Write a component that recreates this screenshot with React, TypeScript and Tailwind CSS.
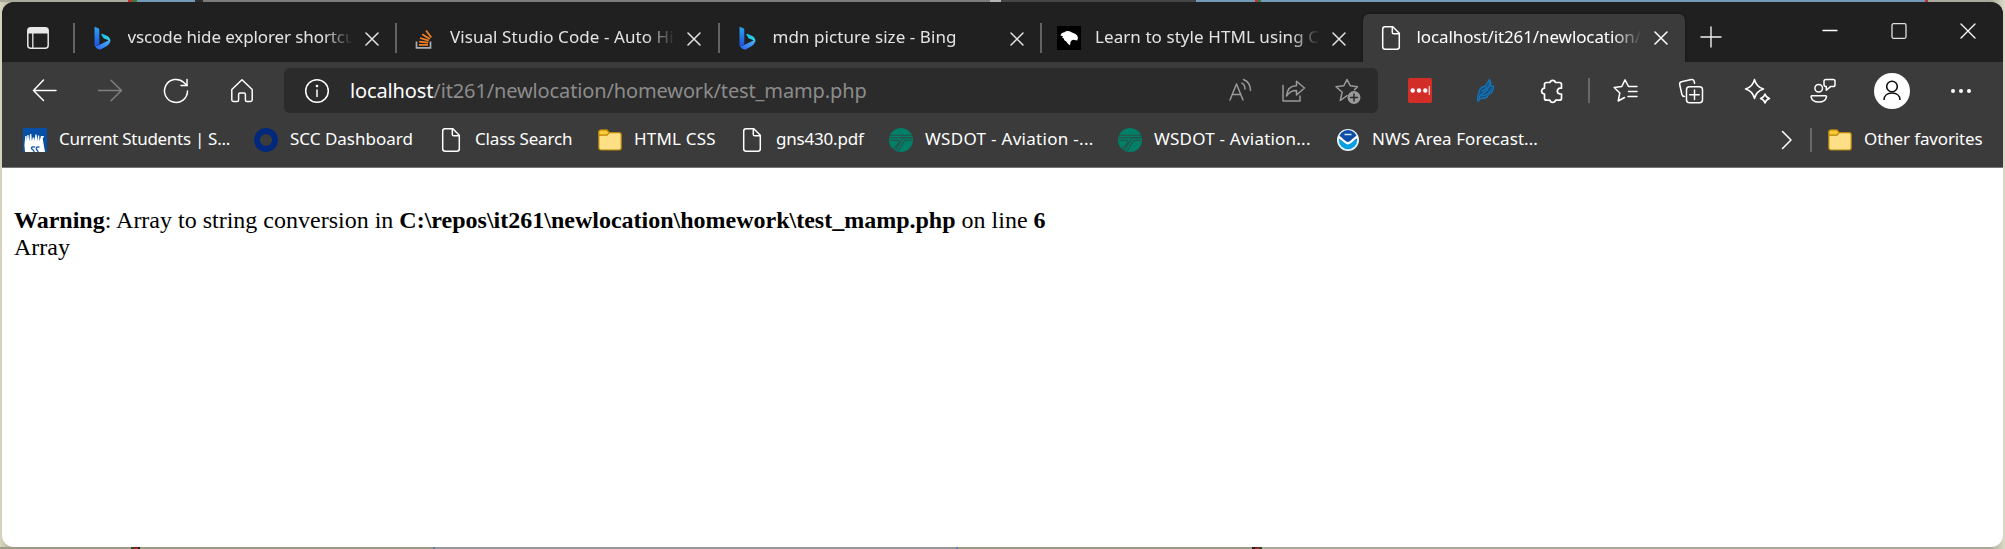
import React from "react";

const Bing = () => (
  <svg width="24" height="24" viewBox="0 0 24 24">
    <defs>
      <linearGradient id="bingStem" x1="0" y1="0" x2="0" y2="1">
        <stop offset="0" stopColor="#2ba6f0" />
        <stop offset="1" stopColor="#1c4fe0" />
      </linearGradient>
      <linearGradient id="bingBowl" x1="0" y1="1" x2="1" y2="0">
        <stop offset="0" stopColor="#2a62f4" />
        <stop offset="1" stopColor="#4bb8fb" />
      </linearGradient>
      <linearGradient id="bingTop" x1="0" y1="0" x2="1" y2="1">
        <stop offset="0" stopColor="#1fb4e8" />
        <stop offset="1" stopColor="#2fe0e8" />
      </linearGradient>
    </defs>
    <path d="M4.5 .8 8.3 2.2a1.6 1.6 0 0 1 1 1.5V18.500L5.600 20.600A2 2 0 0 1 4.500 18.500Z" fill="url(#bingStem)" />
    <path d="M5 19.300c.6 1 2 .8 3.200.1L20.300 13.500c0 3-1 5-3.500 6.500L11.500 23c-2.700 1.500-5.700-.5-6.500-3.700Z" fill="url(#bingBowl)" />
    <path d="M11.200 8.500c.3-.9 1-.8 1.700-.5l4.400 2.100c2.200 1.100 3.300 3.300 3 5.900-.7-1.400-2-2-3.400-2.500l-2.500-.8c-.6-.2-.9-.5-1.200-1Z" fill="url(#bingTop)" />
  </svg>
);

const StackOverflow = () => (
  <svg width="24" height="24" viewBox="0 0 24 24" fill="none">
    <path d="M4.500 15.500v6.300h14v-6.300" stroke="#a9adb1" strokeWidth="1.700" />
    <g stroke="#f48024" strokeWidth="1.800">
      <path d="M7 18.800h9" />
      <path d="m7.200 15.700 9 1" />
      <path d="m8 12 8.700 2.700" />
      <path d="m10.200 8.200 7.600 4.700" />
      <path d="m14 4.500 5.300 7" />
    </g>
  </svg>
);

const DinoHead = () => (
  <svg width="24" height="24" viewBox="0 0 24 24">
    <rect width="24" height="24" fill="#000" />
    <path d="M3.500 9.500C4 7 6 6.500 7.500 6.200 9 4.700 12 4.800 14.500 6.200L18.500 8l1.800 1.700.7 2.300-.8 2.500-3.700-.8c-1.500.2-2.500 1-3 2.500l-.5 3.300-2-1.700-2-2.500-1.700-1-.5-1.800-1.500-.8.600-1.500Z" fill="#fff" />
  </svg>
);

const FileIcon = () => (
  <svg width="24" height="24" viewBox="0 0 24 24" fill="none" stroke="#fff" strokeWidth="1.500">
    <path d="M6 .8h7.800l6.500 6.500v13.400a2.500 2.500 0 0 1-2.500 2.500H6.200a2.500 2.500 0 0 1-2.500-2.500V3.200A2.400 2.400 0 0 1 6 .8Z" />
    <path d="M13.300.8v5.600c0 .9.500 1.400 1.400 1.400h5.600" />
  </svg>
);

const Folder = () => (
  <svg width="24" height="24" viewBox="0 0 24 24" stroke="#b58407" strokeWidth="1.200">
    <path d="M.8 20V4a2 2 0 0 1 2-2H9l2.200 2.600h10a2 2 0 0 1 2 2V20a2 2 0 0 1-2 2H2.800a2 2 0 0 1-2-2Z" fill="#ffdf85" />
    <path d="M.8 7.200V4a2 2 0 0 1 2-2H9l2.200 2.600L9 7.200Z" fill="#fdcb3a" />
  </svg>
);

const Students = () => (
  <svg width="24" height="24" viewBox="0 0 24 24">
    <rect width="24" height="24" fill="#0750a8" />
    <path d="M2 24 1.400 17 2.300 8l1.300 0 .3 5.500L4.300 7h1.300l.6 6.500L7.100 6h1.200l.5 7 1-3.500h1.300l.5 3.500.7-6.500h1.300l.8 6.500.6-5.500h1.200l.3 5.500 1.400-4.500-.3-.5h3.600l-1.500 2.500.8 5L22 24Z" fill="#fff" />
    <path d="M12 19.200c-2-.8-3.700-.2-3.500 1.200.2 1.200 2.600 1.200 2.700 3.600M16.500 19.200c-2-.6-3.300 0-3.300 1.500 0 1.200 1.700 1.500 2 3.300" stroke="#0750a8" strokeWidth="1.300" fill="none" />
  </svg>
);

const Ring = () => (
  <svg width="24" height="24" viewBox="0 0 24 24">
    <circle cx="12" cy="12" r="9" fill="none" stroke="#00287c" strokeWidth="5.800" />
  </svg>
);

const Wsdot = () => (
  <svg width="24" height="24" viewBox="0 0 24 24">
    <circle cx="12" cy="12" r="12" fill="#008068" />
    <g fill="none" stroke="#2b4f48" strokeWidth="1.100">
      <path d="M1 7.300h22M0 9.800h23.500M1 12.300h7.500c2 0 1.800 1.500.8 3L4 21.500" />
      <path d="M23 12.300h-5.500c-1.700 0-2.500 1-3.200 2.200L9 23.500M23.300 9.800H16c-1.700 0-2.500 1-3.500 2.500L6 23" />
    </g>
  </svg>
);

const Noaa = () => (
  <svg width="24" height="24" viewBox="0 0 24 24">
    <circle cx="12" cy="12" r="11" fill="#e9f3fb" />
    <circle cx="12" cy="12" r="9.200" fill="#0a9fe0" />
    <path d="M2.800 11.300A9.200 9.200 0 0 1 21.200 11.300L12 15Z" fill="#0d4ea6" />
    <path d="M2.800 7.500c3 1.500 6 6 9.200 6.500 3-.5 5.500-5 9.400-6.700v3c-3.500 1.500-6 5.700-9.400 6.200-3.300-.5-6-4.700-9.400-5.800Z" fill="#fff" />
    <path d="M8.500 6.500h7" stroke="#d7e6f5" strokeWidth="1.500" />
  </svg>
);

type StrokeProps = { children: React.ReactNode; w?: number; h?: number; color?: string; sw?: number };

const Stroke = ({ children, w = 26, h = 26, color = "#fff", sw = 1.5 }: StrokeProps) => (
  <svg width={w} height={h} viewBox={`0 0 ${w} ${h}`} fill="none" stroke={color} strokeWidth={sw} strokeLinecap="round" strokeLinejoin="round" className="block shrink-0">
    {children}
  </svg>
);

const TabClose = ({ color = "#e4e4e4" }: { color?: string }) => (
  <Stroke w={14} h={14} color={color} sw={1.5}>
    <path d="m1 1 12 12M13 1 1 13" />
  </Stroke>
);

const PinnedPanel = () => (
  <svg width="22" height="22" viewBox="0 0 22 22" fill="none">
    <rect x=".8" y=".8" width="20.400" height="20.400" rx="3" stroke="#e8e8e8" strokeWidth="1.500" />
    <path d="M1 6.500V3.500A2.500 2.500 0 0 1 3.500 1h15A2.500 2.500 0 0 1 21 3.500v3Z" fill="#e8e8e8" />
    <path d="M5.800 6v15" stroke="#e8e8e8" strokeWidth="1.300" />
  </svg>
);

type Tab = { title: string; icon: React.ReactNode; track: string };

const tabs: Tab[] = [
  { title: "vscode hide explorer shortcut", icon: <Bing />, track: "tracking-[-0.11px]" },
  { title: "Visual Studio Code - Auto Hide", icon: <StackOverflow />, track: "tracking-[0.07px]" },
  { title: "mdn picture size - Bing", icon: <Bing />, track: "tracking-[0.07px]" },
  { title: "Learn to style HTML using CSS", icon: <DinoHead />, track: "tracking-[0.07px]" },
];

const bookmarks = [
  { label: "Current Students | S...", icon: <Students />, width: "w-[231px]", track: "tracking-[-0.29px]" },
  { label: "SCC Dashboard", icon: <Ring />, width: "w-[185px]", track: "tracking-[0px]" },
  { label: "Class Search", icon: <FileIcon />, width: "w-[159px]", track: "tracking-[-0.15px]" },
  { label: "HTML CSS", icon: <Folder />, width: "w-[142px]", track: "tracking-[0.2px]" },
  { label: "gns430.pdf", icon: <FileIcon />, width: "w-[149px]", track: "tracking-[-0.2px]" },
  { label: "WSDOT - Aviation -...", icon: <Wsdot />, width: "w-[229px]", track: "tracking-[0.3px]" },
  { label: "WSDOT - Aviation...", icon: <Wsdot />, width: "w-[218px]", track: "tracking-[0.22px]" },
  { label: "NWS Area Forecast...", icon: <Noaa />, width: "w-[240px]", track: "tracking-[0.07px]" },
];

const Title = ({ text, track, active = false }: { text: string; track: string; active?: boolean }) => (
  <div className="ml-[14px] w-[225px] overflow-hidden whitespace-nowrap [mask-image:linear-gradient(to_right,#000_196px,transparent_225px)]">
    <span className={`${track} ${active ? "text-white" : "text-[#e4e4e4]"}`}>{text}</span>
  </div>
);

const TabStrip = () => (
  <div className="flex h-[60px] bg-[#202020]">
    <div className="flex w-[70.500px] items-center pl-[25px] pt-[11px]">
      <PinnedPanel />
    </div>
    {tabs.map((t, i) => (
      <div key={i} className="flex w-[322.500px] items-center pt-[12px]">
        <div className="h-[30px] w-[2px] shrink-0 bg-[#636363]" />
        <div className="ml-[15px] shrink-0">{t.icon}</div>
        <div className="-mt-[2px]">
          <Title text={t.title} track={t.track} />
        </div>
        <div className="ml-[12px] mt-px">
          <TabClose />
        </div>
      </div>
    ))}
    <div className="mt-[12px] flex h-[48px] w-[322px] rounded-t-[6px] bg-[#3b3b3b] pl-[16px] shadow-[0_0_3px_rgba(0,0,0,0.6)] [clip-path:inset(-4px_-4px_0_-4px)]">
      <div className="mt-[12px] shrink-0">
        <FileIcon />
      </div>
      <div className="pt-[11px]">
        <Title text="localhost/it261/newlocation/homework" track="tracking-[-0.1px]" active />
      </div>
      <div className="ml-[12px] mt-[17px]">
        <TabClose color="#fff" />
      </div>
    </div>
    <div className="ml-[15px] mt-[24px]">
      <Stroke w={22} h={22} color="#f0f0f0" sw={1.4}>
        <path d="M11 1v20M1 11h20" />
      </Stroke>
    </div>
    <div className="ml-auto mr-[27px] flex gap-[53px] pt-[20px]">
      <Stroke w={16} h={18} sw={1.3}>
        <path d="M1 8.500h14" />
      </Stroke>
      <Stroke w={16} h={18} sw={1.3} color="#e0e0e0">
        <rect x="1" y="1.700" width="14" height="14.600" rx="1.500" />
      </Stroke>
      <Stroke w={16} h={18} sw={1.3}>
        <path d="m1 2 14 14M15 2 1 16" />
      </Stroke>
    </div>
  </div>
);

const AddressBar = () => (
  <div className="ml-[29px] flex h-[45px] w-[1094px] items-center rounded-[6px] bg-[#2b2b2b] pl-[20px] pr-[16px]">
    <Stroke>
      <circle cx="13" cy="13" r="11.300" />
      <path d="M13 12v6.500" />
      <circle cx="13" cy="8" r=".6" fill="#fff" />
    </Stroke>
    <div className="ml-[20px] whitespace-nowrap text-[20px] tracking-[-0.130px] text-[#8c8c8c]">
      <span className="text-white">localhost</span>/it261/newlocation/homework/test_mamp.php
    </div>
    <div className="ml-auto flex gap-[27px]">
      <Stroke color="#9a9a9a">
        <path d="M2 22 8.500 6 15 22M4.500 16.500h8" />
        <path d="M13.800 5.200c2 1 3.200 3.300 3.200 5.800M15.500 1.500c4.200 1.700 7 6 7 11" />
      </Stroke>
      <Stroke color="#9a9a9a">
        <path d="M2 7.500V23h17v-5" />
        <path d="M15.500 3.200v4.500C9.500 7.700 6 11.500 5.500 18c2.500-4 5.500-5.500 10-5.500V17l8-7Z" />
      </Stroke>
      <Stroke color="#9a9a9a" w={28}>
        <path d="m13 17.700-6.700 4.800L8.200 14.200 2 8.700l7.700-.9L13 1.500l3.300 6.300 7.200.9-3 3" />
        <circle cx="20" cy="19.500" r="6.500" fill="#9a9a9a" stroke="none" />
        <path d="M20 16v7M16.500 19.500h7" stroke="#2b2b2b" />
      </Stroke>
    </div>
  </div>
);

const Toolbar = () => (
  <div className="flex h-[57px] items-center pl-[29px]">
    <div className="flex gap-[40px]">
      <Stroke>
        <path d="M25 12.500H3M12.500 2 2.500 12.500l10 10" />
      </Stroke>
      <Stroke color="#808080">
        <path d="M1.500 12.500h23M14 2.300l10.500 10.200L14 22.700" />
      </Stroke>
      <Stroke>
        <path d="M24.500 13a11.500 11.500 0 1 1-3.700-8.500L24 7.500" />
        <path d="M24 1.500v6h-6" />
      </Stroke>
      <Stroke>
        <path d="M2.800 11.500 13 1.800l10.200 9.700v10.300a1.700 1.700 0 0 1-1.700 1.700h-3.600a1.500 1.500 0 0 1-1.500-1.500v-5.500c0-1-.6-1.500-1.500-1.500h-3.800c-.9 0-1.500.5-1.500 1.500V22a1.500 1.500 0 0 1-1.500 1.500H4.500a1.700 1.700 0 0 1-1.700-1.700Z" />
      </Stroke>
    </div>
    <AddressBar />
    <div className="ml-[30px]">
      <svg width="24" height="25" viewBox="0 0 24 25" className="block">
        <rect width="24" height="25" rx="2" fill="#d32d27" />
        <circle cx="4.700" cy="12.500" r="2.200" fill="#fff" />
        <circle cx="11" cy="12.500" r="2.200" fill="#fff" />
        <circle cx="17.300" cy="12.500" r="2.200" fill="#fff" />
        <path d="M21.300 8v9" stroke="#fbb" strokeWidth="1.400" />
      </svg>
    </div>
    <div className="ml-[42px]">
      <Stroke w={24} color="#1673b8" sw={1.3}>
        <path d="M4 23.500c-.8-4-.6-6 1-9 0-3 2.500-6 6.500-6.500C12.500 5 14.500 4 15.500 1.500 17.500 4 17 6 16.500 8c1.500.5 2 .3 3 0 0 3.500-1.500 7.500-5 8.500-1 3-4 4-6.500 3.700-2 .5-3 1.500-4 3.300Z" fill="#174f79" />
        <path d="M5 21c0-5 4-5 6.500-7.500S16 8 15.500 4M8 13c3-.5 4-2 5-4M8.500 17.500c4 .5 7-3 9-6.500" />
      </Stroke>
    </div>
    <div className="ml-[41px]">
      <Stroke sw={1.7}>
        <path d="M7.500 4.500h3.400a2.900 2.900 0 0 1 5.600 0h4A2 2 0 0 1 22.500 6.500v3.700h-1.300a2.900 2.900 0 0 0 0 5.800h1.300v4.200a2 2 0 0 1-2 2h-4a2.900 2.900 0 0 1-5.600 0H7.500a2 2 0 0 1-2-2V16a2.900 2.900 0 0 1 0-5.800V6.500a2 2 0 0 1 2-2Z" />
      </Stroke>
    </div>
    <div className="ml-[23px] h-[25px] w-[2px] bg-[#686868]" />
    <div className="ml-[22px] flex gap-[40px]">
      <Stroke>
        <path d="M25 8.500h-8.500L13 1.800 9.800 8.500l-7.600 1L7.800 15 6.200 23l6.300-3.500M16.500 13.500H25M16 18.500h9" />
      </Stroke>
      <Stroke>
        <path d="M6.500 18.500c-1.500 0-2.300-.6-2.600-2L1.700 6.500c-.3-1.500.5-2.500 1.800-2.800L13.300 1.500c1.500-.3 2.400.3 2.800 1.800l.5 2" />
        <rect x="8.500" y="8.700" width="16" height="16" rx="3" />
        <path d="M16.500 12v9.500M11.700 16.700h9.500" />
      </Stroke>
      <Stroke w={28}>
        <path d="M10.500 1.500c1.300 5.500 3.500 8 9 9.500-5.500 1.500-7.700 4-9 9.500-1.300-5.500-3.500-8-9-9.500 5.500-1.500 7.700-4 9-9.500Z" />
        <path d="M21 16c.8 2.700 1.700 3.700 4.500 4.500-2.800.8-3.700 1.700-4.500 4.500-.8-2.800-1.700-3.700-4.500-4.500C19.300 19.700 20.200 18.700 21 16Z" />
      </Stroke>
    </div>
    <div className="ml-[38px]">
      <Stroke>
        <circle cx="8.700" cy="10.300" r="3.800" />
        <path d="M1.800 17.800h14a.8.800 0 0 1 .7 1c-.7 3.400-3.500 5.200-7.700 5.200s-7-1.800-7.700-5.200a.8.800 0 0 1 .7-1Z" />
        <path d="M15.800 1.500h7.400a1.800 1.800 0 0 1 1.800 1.800v3.500a1.800 1.800 0 0 1-1.800 1.800h-2.700l-4.200 3.700V8.500c-1.300 0-2.300-.7-2.300-1.700V3.300a1.800 1.800 0 0 1 1.800-1.800Z" />
      </Stroke>
    </div>
    <div className="ml-[38px]">
      <svg width="36" height="36" viewBox="0 0 36 36" fill="none" className="block">
        <circle cx="18" cy="18" r="18" fill="#fff" />
        <circle cx="18" cy="13.500" r="5.300" stroke="#111" strokeWidth="1.600" />
        <path d="M10 27c0-4.500 3.500-7 8-7s8 2.500 8 7" stroke="#111" strokeWidth="1.600" />
      </svg>
    </div>
    <div className="ml-[41px] flex gap-[4px]">
      <div className="size-[4px] rounded-full bg-white" />
      <div className="size-[4px] rounded-full bg-white" />
      <div className="size-[4px] rounded-full bg-white" />
    </div>
  </div>
);

const BookmarksBar = () => (
  <div className="flex h-[48px] items-center pb-[8px] pl-[21px] text-white">
    {bookmarks.map((b, i) => (
      <div key={i} className={`flex shrink-0 items-center whitespace-nowrap ${b.width}`}>
        <div className="mt-[2px] mr-[12px] shrink-0">{b.icon}</div>
        <span className={b.track}>{b.label}</span>
      </div>
    ))}
    <div className="ml-auto mr-[22px] flex items-center whitespace-nowrap">
      <div className="mt-[2px]">
        <Stroke w={12} h={20}>
          <path d="m1.500 1.500 8.500 8.500-8.500 8.500" />
        </Stroke>
      </div>
      <div className="ml-[17px] mt-[2px] h-[24px] w-[2px] bg-[#686868]" />
      <div className="ml-[16px] mr-[12px] mt-[2px]">
        <Folder />
      </div>
      <div className="w-[117px]">
        <span className="tracking-[-0.130px]">Other favorites</span>
      </div>
    </div>
  </div>
);

const Desktop = ({ children }: { children: React.ReactNode }) => (
  <div className="flex h-[549px] w-[2005px] flex-col bg-[linear-gradient(to_right,#d8d5bf_0,#a9aa9b_14px,#a9aa9b_1990px,#dcdbc6_2005px)]">
    {children}
  </div>
);

export default function App() {
  return (
    <Desktop>
      <div className="flex h-[2px] shrink-0">
        <div className="w-[128px] bg-[#a9aa9b]" />
        <div className="w-[4px] bg-[#c43030]" />
        <div className="w-[5px] bg-[#3c7a38]" />
        <div className="w-[58px] bg-[#729bb9]" />
        <div className="w-[8px] bg-[#2c2c2c]" />
        <div className="w-[787px] bg-[#7b7b7b]" />
        <div className="w-[11px] bg-[#b4b4b4]" />
        <div className="w-[195px] bg-[#454545]" />
        <div className="w-[59px] bg-[#729bb9]" />
        <div className="w-[3px] bg-[#c43030]" />
        <div className="w-[3px] bg-[#3c7a38]" />
        <div className="w-[664px] bg-[#729bb9]" />
        <div className="w-[3px] bg-[#c43030]" />
      </div>
      <div className="ml-[2px] flex h-[545px] w-[2001px] flex-col overflow-hidden rounded-[12px] bg-white">
        <div className="flex flex-col bg-[#3b3b3b] font-['Noto_Sans','Open_Sans',sans-serif] text-[17px] leading-[24px]">
          <TabStrip />
          <Toolbar />
          <BookmarksBar />
          <div className="h-px bg-[#767676]" />
        </div>
        <main className="px-[12px] pt-[39px] font-['Liberation_Serif','Times_New_Roman',serif] text-[24px] leading-[27px] text-black">
          <b>Warning</b>: Array to string conversion in <b>C:\repos\it261\newlocation\homework\test_mamp.php</b> on line <b>6</b>
          <br />
          Array
        </main>
      </div>
      <div className="flex h-[2px] shrink-0">
        <div className="w-[131px] bg-[#9c9c86]" />
        <div className="w-[3px] bg-[#2d4a26]" />
        <div className="w-[4px] bg-[#a02020]" />
        <div className="w-[2px] bg-[#222]" />
        <div className="w-[293px] bg-[#9c9c86]" />
        <div className="w-[2px] bg-[#5f7fae]" />
        <div className="w-[521px] bg-[#98979a]" />
        <div className="w-[2px] bg-[#5f7fae]" />
        <div className="w-[294px] bg-[#9c9c86]" />
        <div className="w-[3px] bg-[#222]" />
        <div className="w-[4px] bg-[#a02020]" />
        <div className="w-[3px] bg-[#2d4a26]" />
      </div>
    </Desktop>
  );
}
